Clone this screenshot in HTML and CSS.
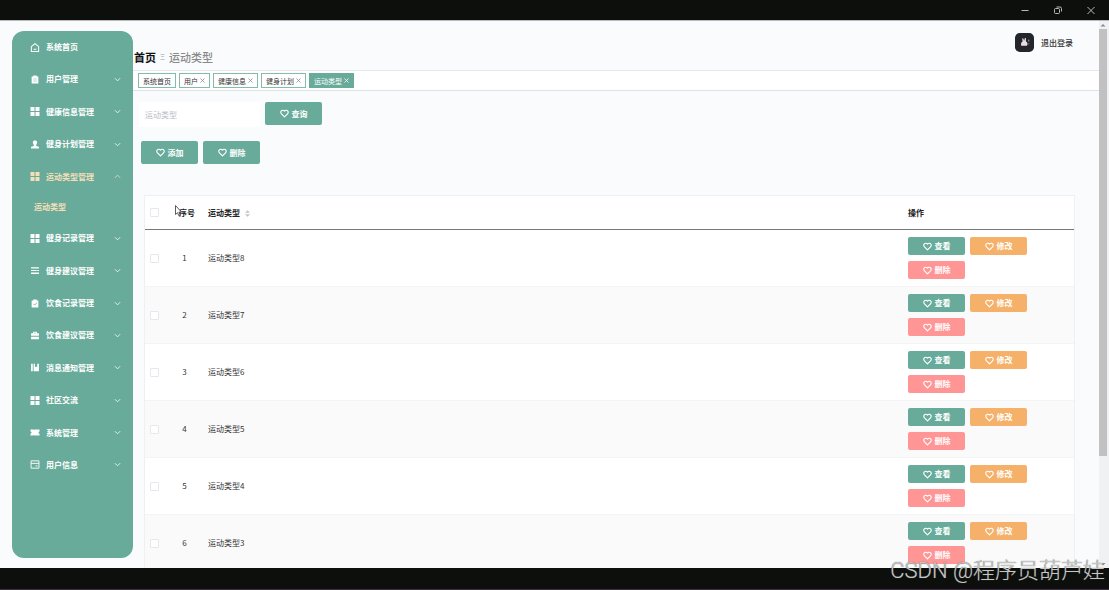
FILE: index.html
```html
<!DOCTYPE html>
<html lang="zh-CN">
<head>
  <meta charset="UTF-8">
  <meta name="viewport" content="width=device-width, initial-scale=1.0">
  <title>运动类型</title>
  <link rel="stylesheet" href="styles.css">
</head>
<body>
  <!-- shared icons -->
  <svg class="sprite" aria-hidden="true">
    <symbol id="heart" viewBox="0 0 16 16"><path d="M8 14 2.600 8.600C1 7 1 4.600 2.400 3.200c1.500-1.400 3.900-1.300 5.600.6 1.700-1.900 4.100-2 5.600-.6C15 4.600 15 7 13.400 8.600Z" fill="none" stroke="currentColor" stroke-width="2" stroke-linejoin="round"/></symbol>
    <symbol id="arrow" viewBox="0 0 16 16"><path d="M2 5l6 6 6-6" fill="none" stroke="currentColor" stroke-width="1.800"/></symbol>
    <symbol id="home" viewBox="0 0 16 16"><path d="M1.500 6.500 8 1l6.500 5.500V15h-13ZM5.500 11h5" fill="none" stroke="currentColor" stroke-width="1.800" stroke-linejoin="round"/></symbol>
    <symbol id="clipboard" viewBox="0 0 16 16"><path fill-rule="evenodd" d="M2 2.500h3V1h6v1.500h3V15H2ZM5 6.500v1h6v-1ZM5 10v1h6v-1Z" fill="currentColor"/></symbol>
    <symbol id="grid" viewBox="0 0 9 9"><path d="M0 0h4v4H0ZM5 0h4v4H5ZM0 5h4v4H0ZM5 5h4v4H5Z" fill="currentColor"/></symbol>
    <symbol id="person" viewBox="0 0 16 16"><path d="M8 1c5 0 4.500 5 2 8v1.500l5 1.500v3H1v-3l5-1.500V9C3.500 6 3 1 8 1Z" fill="currentColor"/></symbol>
    <symbol id="list" viewBox="0 0 16 16"><path d="M1 2h14v2.500H1ZM1 7h10v2H1ZM12 7h3v2h-3ZM1 11.500h14V14H1Z" fill="currentColor"/></symbol>
    <symbol id="check" viewBox="0 0 16 16"><path d="M2 2.500h3V1h6v1.500h3V15H2Z" fill="currentColor"/><path d="m5 8.500 2.300 2.300L11.500 6.500" fill="none" stroke="#68ab9a" stroke-width="1.500"/></symbol>
    <symbol id="case" viewBox="0 0 16 16"><path fill-rule="evenodd" d="M4.500 4V1.500h7V4H15v4.500H1V4ZM6 4h4V3H6ZM1 10h14v4.500H1Z" fill="currentColor"/></symbol>
    <symbol id="book" viewBox="0 0 16 16"><path d="M1 1.500h3v13H1ZM5.500 1.500H8v6l2-1.500 2 1.500v-6h3v13H5.500Z" fill="currentColor"/></symbol>
    <symbol id="ticket" viewBox="0 0 16 16"><path d="M0 2.500h5l1 1 1-1h9v3.500c-2.500.5-2.500 3.500 0 4v3.500H7l-1-1-1 1H0V10c2.500-.5 2.500-3.500 0-4Z" fill="currentColor"/></symbol>
    <symbol id="card" viewBox="0 0 16 16"><path d="M1 1.500h14v13H1ZM1 6h14M9 10.500h3.500" fill="none" stroke="currentColor" stroke-width="1.600"/></symbol>
  </svg>

  <div class="titlebar">
    <button type="button" aria-label="最小化"><svg viewBox="0 0 10 10"><path d="M1.500 5.500h7"/></svg></button>
    <button type="button" aria-label="还原"><svg viewBox="0 0 10 10"><rect x="1.500" y="3.500" width="5" height="5" rx="1"/><path d="M3.500 2H7q1.500 0 1.500 1.500V6.500"/></svg></button>
    <button type="button" aria-label="关闭"><svg viewBox="0 0 10 10"><path d="m1.500 2 7 7m0-7-7 7"/></svg></button>
  </div>

  <div class="app">
    <aside class="sidebar">
      <nav class="menu">
        <a href="#"><svg class="icon"><use href="#home"/></svg><span>系统首页</span></a>
        <a href="#"><svg class="icon"><use href="#clipboard"/></svg><span>用户管理</span><svg class="arrow"><use href="#arrow"/></svg></a>
        <a href="#"><svg class="icon"><use href="#grid"/></svg><span>健康信息管理</span><svg class="arrow"><use href="#arrow"/></svg></a>
        <a href="#"><svg class="icon"><use href="#person"/></svg><span>健身计划管理</span><svg class="arrow"><use href="#arrow"/></svg></a>
        <a href="#" class="active open"><svg class="icon"><use href="#grid"/></svg><span>运动类型管理</span><svg class="arrow"><use href="#arrow"/></svg></a>
        <a href="#" class="active sub">运动类型</a>
        <a href="#"><svg class="icon"><use href="#grid"/></svg><span>健身记录管理</span><svg class="arrow"><use href="#arrow"/></svg></a>
        <a href="#"><svg class="icon"><use href="#list"/></svg><span>健身建议管理</span><svg class="arrow"><use href="#arrow"/></svg></a>
        <a href="#"><svg class="icon"><use href="#check"/></svg><span>饮食记录管理</span><svg class="arrow"><use href="#arrow"/></svg></a>
        <a href="#"><svg class="icon"><use href="#case"/></svg><span>饮食建议管理</span><svg class="arrow"><use href="#arrow"/></svg></a>
        <a href="#"><svg class="icon"><use href="#book"/></svg><span>消息通知管理</span><svg class="arrow"><use href="#arrow"/></svg></a>
        <a href="#"><svg class="icon"><use href="#grid"/></svg><span>社区交流</span><svg class="arrow"><use href="#arrow"/></svg></a>
        <a href="#"><svg class="icon"><use href="#ticket"/></svg><span>系统管理</span><svg class="arrow"><use href="#arrow"/></svg></a>
        <a href="#"><svg class="icon"><use href="#card"/></svg><span>用户信息</span><svg class="arrow"><use href="#arrow"/></svg></a>
      </nav>
    </aside>

    <main class="main">
      <header class="header">
        <div class="breadcrumb"><a href="#">首页</a><i>Ξ</i><span>运动类型</span></div>
        <div class="user">
          <svg class="avatar" viewBox="0 0 20 20"><rect width="20" height="20" rx="5" fill="#25262c"/><path d="M6.500 13.500c-.5-3 .5-4 1.500-4.500L7.500 5.500l1.500.5.500 2.500L10.500 5l1 .5v3.500c2 1 2 3 1 4.500Z" fill="#eddde0"/><path d="M14.500 7v2m0 2v1" stroke="#a1a0a8"/></svg>
          <a href="#">退出登录</a>
        </div>
      </header>

      <div class="tabs">
        <a href="#">系统首页</a>
        <a href="#">用户<svg viewBox="0 0 5 5"><path d="m.5.5 4 4m0-4-4 4"/></svg></a>
        <a href="#">健康信息<svg viewBox="0 0 5 5"><path d="m.5.5 4 4m0-4-4 4"/></svg></a>
        <a href="#">健身计划<svg viewBox="0 0 5 5"><path d="m.5.5 4 4m0-4-4 4"/></svg></a>
        <a href="#" class="current">运动类型<svg viewBox="0 0 5 5"><path d="m.5.5 4 4m0-4-4 4"/></svg></a>
      </div>

      <div class="content">
        <form class="search">
          <input type="text" placeholder="运动类型" aria-label="运动类型">
          <button type="button" class="btn large"><svg><use href="#heart"/></svg>查询</button>
        </form>
        <div class="actions">
          <button type="button" class="btn large"><svg><use href="#heart"/></svg>添加</button>
          <button type="button" class="btn large"><svg><use href="#heart"/></svg>删除</button>
        </div>

        <table class="table">
          <thead>
            <tr>
              <th class="col-check"><input type="checkbox" aria-label="全选"></th>
              <th class="col-index">序号</th>
              <th>运动类型<svg class="sort" viewBox="0 0 6 8"><path d="M3 0l3 3H0ZM3 8 0 5h6Z"/></svg></th>
              <th class="col-ops">操作</th>
            </tr>
          </thead>
          <tbody id="rows"></tbody>
        </table>
      </div>
    </main>

    <div class="scrollbar">
      <svg viewBox="0 0 8 8"><path d="M1.500 5.500 4 3l2.500 2.500Z"/></svg>
      <div class="thumb"></div>
      <svg class="down" viewBox="0 0 8 8"><path d="M1.500 3 4 5.500 6.500 3Z"/></svg>
    </div>
  </div>

  <div class="bottombar"></div>

  <svg class="cursor" viewBox="0 0 8 12"><path d="M.5.5v9l2-1.800 1.300 3 1.400-.6-1.300-3h2.600Z" fill="#fff" stroke="#333" stroke-width=".8"/></svg>
  <div class="watermark">CSDN @程序员葫芦娃</div>

  <script>
    const rows = document.getElementById('rows');
    const names = ['运动类型8', '运动类型7', '运动类型6', '运动类型5', '运动类型4', '运动类型3'];
    const heart = '<svg><use href="#heart"/></svg>';

    names.forEach((name, i) => {
      const tr = document.createElement('tr');
      tr.innerHTML = `
        <td class="col-check"><input type="checkbox" aria-label="选择${name}"></td>
        <td class="col-index">${i + 1}</td>
        <td>${name}</td>
        <td class="col-ops"><div class="ops">
          <button type="button" class="btn">${heart}查看</button>
          <button type="button" class="btn edit">${heart}修改</button>
          <button type="button" class="btn delete">${heart}删除</button>
        </div></td>`;
      rows.appendChild(tr);
    });
  </script>
</body>
</html>
```

FILE: styles.css
```css
:root {
  --primary: #68ab9a;
  --active: #f5dfb8;
  --edit: #f5b169;
  --delete: #ff9695;
  --bg: #fafbfd;
  --line: #eef0f3;
}
* { box-sizing: border-box; margin: 0; padding: 0; }
body {
  position: relative;
  display: flex;
  flex-direction: column;
  height: 100vh;
  overflow: hidden;
  font-family: "Noto Sans CJK SC", sans-serif;
  font-size: 8px;
  line-height: 12px;
  color: #333;
  background: var(--bg);
}
a { color: inherit; text-decoration: none; }
button { font: inherit; border: none; cursor: pointer; }
.sprite { position: absolute; width: 0; height: 0; }

.titlebar {
  flex: none;
  display: flex;
  justify-content: flex-end;
  align-items: center;
  gap: 23px;
  height: 21px;
  padding-right: 13px;
  background: #0d0f0c;
  border-bottom: 1px solid #b9bbbc;
}
.titlebar button {
  display: flex;
  background: none;
}
.titlebar svg {
  width: 10px;
  height: 10px;
  fill: none;
  stroke: #b8b8b8;
}
.bottombar {
  flex: none;
  height: 22px;
  background: #0d0f0c;
  border-bottom: 1px solid #3d2c42;
}

.app {
  flex: 1;
  min-height: 0;
  display: flex;
  overflow: hidden;
}
.sidebar {
  flex: none;
  width: 121px;
  margin: 10px 0 10px 12px;
  border-radius: 12px;
  background: var(--primary);
}
.menu {
  display: flex;
  flex-direction: column;
  justify-content: space-between;
  height: 100%;
  padding-bottom: 77px;
}
.menu a {
  display: flex;
  align-items: center;
  height: 32px;
  padding: 0 12px 0 18px;
  color: #fff;
  font-weight: 700;
}
.menu .sub {
  height: 29px;
  padding-left: 22px;
}
.menu .active { color: var(--active); }
.menu .icon {
  width: 10px;
  height: 9px;
  margin-right: 6px;
}
.menu .arrow {
  width: 7px;
  height: 7px;
  margin-left: auto;
}
.menu .open .arrow { transform: rotate(180deg); }

.main {
  flex: 1;
  min-width: 0;
}
.header {
  display: flex;
  justify-content: space-between;
  align-items: flex-end;
  height: 49px;
  padding: 0 26px 4px 1px;
}
.breadcrumb {
  display: flex;
  align-items: center;
  gap: 4px;
  font-size: 11px;
  line-height: 18px;
  color: #8a8a8a;
  font-weight: 500;
}
.breadcrumb a {
  color: #111;
  font-weight: 700;
}
.breadcrumb i {
  font-size: 8px;
  font-style: normal;
  color: #b5b8bd;
}
.user {
  display: flex;
  align-items: center;
  align-self: flex-start;
  gap: 7px;
  padding-top: 12px;
  font-weight: 500;
}
.avatar {
  width: 19px;
  height: 19px;
}

.tabs {
  display: flex;
  align-items: center;
  gap: 3px;
  height: 21px;
  padding: 0 5px;
  background: #fff;
  border-top: 1px solid #e6e8eb;
  border-bottom: 1px solid #dfe2e5;
  font-size: 7px;
}
.tabs a {
  display: flex;
  align-items: center;
  height: 15px;
  padding: 0 4px;
  border: 1px solid #85bbac;
}
.tabs svg {
  width: 5px;
  height: 5px;
  margin-left: 2px;
  fill: none;
  stroke: #888;
  stroke-width: .8;
}
.tabs .current {
  border-color: var(--primary);
  background: var(--primary);
  color: #fff;
}
.tabs .current svg { stroke: #fff; }

.content { padding: 11px 24px 0 6px; }
.search {
  display: flex;
  gap: 5px;
}
.search input {
  width: 121px;
  height: 25px;
  padding: 0 6px;
  border: none;
  background: #fff;
  font: inherit;
}
.search input::placeholder { color: #b8bcc5; }
.actions {
  display: flex;
  gap: 5px;
  margin-top: 14px;
  padding-left: 2px;
}
.btn {
  display: flex;
  align-items: center;
  justify-content: center;
  gap: 3px;
  width: 57px;
  height: 18px;
  border-radius: 2px;
  background: var(--primary);
  color: #fff;
  font-weight: 700;
}
.btn svg {
  width: 9px;
  height: 9px;
}
.btn.large { height: 23px; }
.btn.edit { background: var(--edit); }
.btn.delete { background: var(--delete); }

.table {
  width: calc(100% - 5px);
  margin: 31px 0 0 5px;
  border: 1px solid var(--line);
  border-collapse: separate;
  border-spacing: 0;
  table-layout: fixed;
  background: #fff;
}
.table th {
  height: 34px;
  text-align: left;
  color: #222;
  border-bottom: 1px solid #777;
}
.table td {
  height: 57px;
  border-bottom: 1px solid #f3f4f6;
}
.table tbody tr:nth-child(even) { background: #fafafa; }
.table .col-check {
  width: 20px;
  padding-left: 5px;
}
.table .col-index {
  width: 43px;
  padding-left: 14px;
}
.table td.col-index {
  padding: 0 9px 0 0;
  padding-left: 5px;
  text-align: center;
}
.table .col-ops { width: 166px; }
.table input {
  display: block;
  appearance: none;
  width: 9px;
  height: 9px;
  border: 1px solid #e6e8ec;
  border-radius: 1px;
  background: #fff;
}
.sort {
  width: 5px;
  height: 7px;
  margin-left: 5px;
  vertical-align: middle;
  fill: #c0c4cc;
}
.ops {
  display: flex;
  flex-wrap: wrap;
  gap: 6px 5px;
  width: 125px;
}

.scrollbar {
  flex: none;
  display: flex;
  flex-direction: column;
  width: 10px;
  background: #f0f1f2;
}
.scrollbar svg {
  width: 8px;
  height: 8px;
  fill: #888;
}
.scrollbar .down { margin-top: auto; }
.thumb {
  width: 8px;
  height: 78%;
  background: #c1c1c1;
}

.cursor {
  position: absolute;
  left: 175px;
  top: 205px;
  width: 8px;
  height: 12px;
}
.watermark {
  position: absolute;
  right: 4px;
  bottom: 3px;
  font-family: Roboto, "Noto Sans CJK SC", sans-serif;
  font-size: 22px;
  line-height: 32px;
  font-weight: 300;
  color: #c5c5c5;
  text-shadow: 0 0 1px #555;
}
```
